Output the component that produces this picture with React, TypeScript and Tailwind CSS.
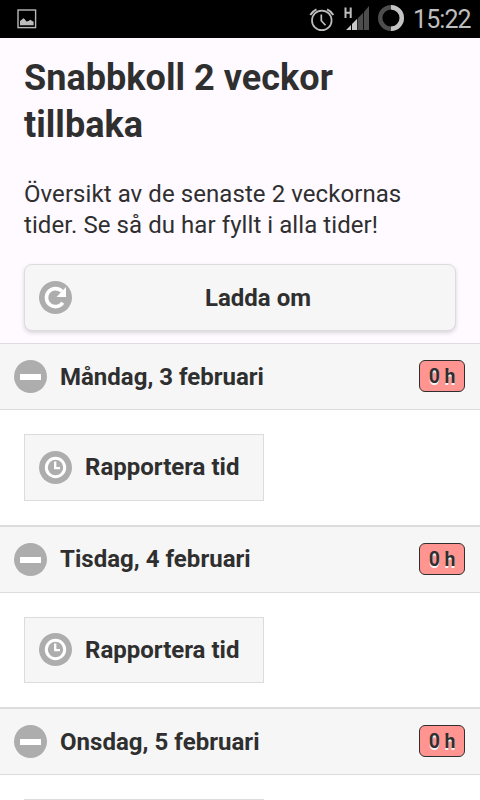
import React from "react";
import clsx from "clsx";

type Day = {
  label: string;
  hours: string;
  header: string;
  body: string;
  button: string;
  icon: string;
  action?: string;
};

const days: Day[] = [
  { label: "Måndag, 3 februari", hours: "0 h", header: "pt-px", body: "h-[116px]", button: "h-[67px]", icon: "", action: "Rapportera tid" },
  { label: "Tisdag, 4 februari", hours: "0 h", header: "tracking-[0.03px]", body: "h-[115px]", button: "h-[66px]", icon: "mb-px", action: "Rapportera tid" },
  { label: "Onsdag, 5 februari", hours: "0 h", header: "pt-px tracking-[0.03px]", body: "h-[116px]", button: "h-[67px]", icon: "" },
];

const StatusBar = () => (
  <div className="h-[38px] shrink-0 bg-black flex items-center justify-between">
    <svg width="20" height="20" viewBox="0 0 20 20" className="ml-[17px]">
      <rect x="1" y="1" width="17.6" height="17.6" fill="none" stroke="#b8b8b8" strokeWidth="1.4" />
      <path d="M3 16.2V12l2-1.6 1.2-1.2 1.6 1 1.6 2.2 2.2-.5 1.6-1.2 1.6 1 1.8 1v3.5z" fill="#bebebe" />
    </svg>
    <div className="flex items-center h-full">
      <svg width="105" height="38" viewBox="0 0 105 38">
        {/* alarm */}
        <g fill="none" stroke="#bebebe" strokeWidth="1.7">
          <circle cx="13.8" cy="20.4" r="9.8" />
          <path d="M13.3 14.5v6.2l4.2 4.6" />
          <path d="M2.300 15a14 14 0 0 1 6.200-5.600M25.300 15a14 14 0 0 0-6.200-5.600" strokeWidth="2" />
        </g>
        {/* signal */}
        <path d="M37.500 7.500v10.500M42.700 7.500v10.500M37.500 12.800h5.200" stroke="#bebebe" strokeWidth="2" />
        <path d="M38 30l5-5v5zM44 24l5.200-5.200V30H44z" fill="#c8c8c8" />
        <path d="M50 18l5.200-5.200V30H50zM56 12l5-6v24h-5z" fill="#4d4d4d" />
        {/* battery */}
        <circle cx="83" cy="18" r="10.800" fill="none" stroke="#4d4d4d" strokeWidth="4.400" />
        <path d="M83 7.200a10.800 10.800 0 0 1 0 21.600" fill="none" stroke="#c4c4c4" strokeWidth="4.400" />
      </svg>
      <span className="w-[67px] pt-[2px] text-[25px] leading-[38px] tracking-[-0.9px] text-[#bebebe]">15:22</span>
    </div>
  </div>
);

const ReloadIcon = () => (
  <svg width="33" height="33" viewBox="0 0 33 33" className="shrink-0">
    <circle cx="16.5" cy="16.5" r="16.5" fill="#adadad" />
    <path d="M23.800 21.800a9 9 0 1 1-.9-11.500" fill="none" stroke="#fff" strokeWidth="3.600" />
    <path d="M27 6v10h-9.500z" fill="#fff" />
  </svg>
);

const MinusIcon = () => (
  <svg width="33" height="33" viewBox="0 0 33 33" className="shrink-0">
    <circle cx="16.5" cy="16.5" r="16.5" fill="#adadad" />
    <path d="M6 14h21v6H6z" fill="#fff" />
  </svg>
);

const ClockIcon = ({ className }: { className?: string }) => (
  <svg width="33" height="33" viewBox="0 0 33 33" className={clsx("shrink-0", className)}>
    <circle cx="16.5" cy="16.5" r="16.5" fill="#adadad" />
    <circle cx="16.5" cy="16.5" r="9.2" fill="none" stroke="#fff" strokeWidth="3" />
    <path d="M16.200 10.500v6.600h4.800" fill="none" stroke="#fff" strokeWidth="2.300" />
  </svg>
);

const DaySection = ({ day }: { day: Day }) => (
  <section>
    <div className="h-[67px] border-y border-[#dcdcdc] bg-[#f6f6f6] flex items-center pl-[14px] pr-[15px]">
      <MinusIcon />
      <h2 className={clsx("ml-[13px] flex-1 text-2xl leading-[31px] font-bold", day.header)}>{day.label}</h2>
      <span className="mb-[2px] w-[46px] h-8 rounded-[6px] border border-[#2f2f2f] bg-[#ff9491] text-center text-[19.5px] leading-[31px] tracking-[-0.2px] font-bold [text-shadow:0_2px_0_#f3f3f3]">
        {day.hours}
      </span>
    </div>
    <div className={clsx("border-b border-[#dcdcdc] bg-white px-6 pt-6 shrink-0", day.body)}>
      <button className={clsx("w-60 border border-[#dcdcdc] bg-[#f6f6f6] flex items-center pl-[14px]", day.button)}>
        {day.action && (
          <>
            <ClockIcon className={day.icon} />
            <span className="ml-[13px] text-2xl leading-[31px] font-bold">{day.action}</span>
          </>
        )}
      </button>
    </div>
  </section>
);

const App = () => {
  return (
    <div className="w-[480px] h-[800px] overflow-hidden flex flex-col bg-[#fefaff] text-[#2f2f2f] font-['Roboto',sans-serif]">
      <StatusBar />
      <header className="h-[305px] shrink-0 px-6 pt-[17px]">
        <h1 className="text-[36px] leading-[47px] font-bold tracking-[0.04px]">
          Snabbkoll 2 veckor
          <br />
          tillbaka
        </h1>
        <p className="mt-[30px] text-2xl leading-[31px] tracking-[0.07px]">
          Översikt av de senaste 2 veckornas
          <br />
          tider. Se så du har fyllt i alla tider!
        </p>
        <button className="mt-[23px] w-full h-[67px] rounded-[8px] border border-[#dcdcdc] bg-[#f6f6f6] shadow-[0_2px_4px_rgba(0,0,0,0.15)] flex items-center pl-[14px] pr-[11px]">
          <ReloadIcon />
          <span className="flex-1 pt-px text-center text-2xl leading-[31px] font-bold">Ladda om</span>
        </button>
      </header>
      <main className="shrink-0">
        {days.map((day) => (
          <DaySection key={day.label} day={day} />
        ))}
      </main>
    </div>
  );
};

export default App;
